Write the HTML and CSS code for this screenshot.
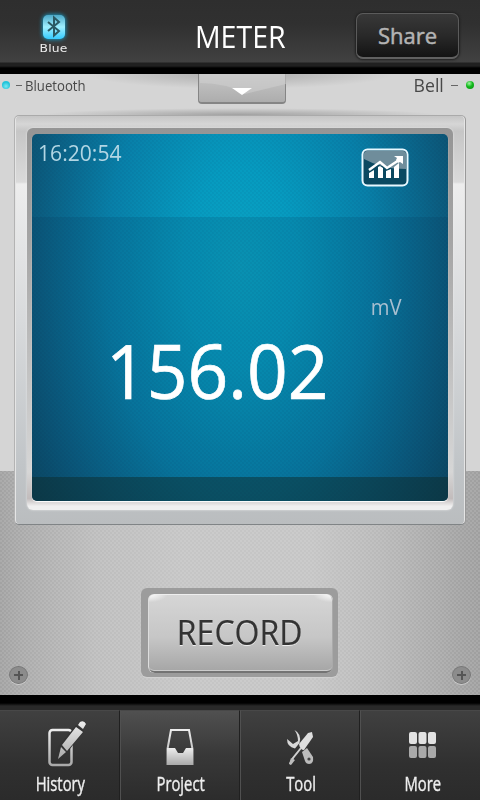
FILE: index.html
```
<!DOCTYPE html>
<html lang="en">
<head>
<meta charset="UTF-8">
<title>Meter</title>
<link rel="stylesheet" href="styles.css">
</head>
<body>
<header class="topbar">
  <div class="blue">
    <svg width="30" height="30" viewBox="0 0 30 30">
      <defs>
        <linearGradient id="glow" x2="0" y2="1"><stop offset="0" stop-color="#4da9c8"/><stop offset=".5" stop-color="#9eefff"/><stop offset="1" stop-color="#35cbff"/></linearGradient>
      </defs>
      <rect class="halo" x="3.500" y="2.500" width="23" height="25" rx="6"/>
      <rect x="4" y="3" width="22" height="24" rx="5" fill="url(#glow)"/>
      <path d="M9 10l11 9-5 4.500v-18l5 4.500-11 9" fill="none" stroke="#2b5963" stroke-width="2"/>
    </svg>
    <span>Blue</span>
  </div>
  <h1><span>METER</span></h1>
  <button class="share"><span>Share</span></button>
</header>

<main class="panel">
  <div class="status">
    <div class="bluetooth"><i class="dot cyan"></i><i class="dash"></i><span>Bluetooth</span></div>
    <div class="pulldown"><svg width="88" height="30" viewBox="0 0 88 30"><path d="M1 9Q28 9 46 20L87 10V0H1z" fill="#d0d0d0" opacity=".55"/><path d="M33 14h20l-10 7z" fill="#fff"/></svg></div>
    <div class="bell"><span>Bell</span><i class="dash"></i><i class="dot green"></i></div>
  </div>

  <section class="frame">
    <div class="bezel">
      <div class="display">
        <div class="display-top">
          <time>16:20:54</time>
          <svg class="chart" width="48" height="39" viewBox="0 0 48 39">
            <rect x="1.500" y="1.500" width="45" height="36" rx="5" fill="#0b4961"/>
            <path d="M3 11V6q0-3 3-3h36q3 0 3 3v15q-24 0-42-10z" fill="#6f8d9b"/>
            <rect x="1.500" y="1.500" width="45" height="36" rx="5" fill="none" stroke="#e8f8ff" stroke-width="2"/>
            <path d="M8 22l11-8 7 6 12-8" fill="none" stroke="#fff" stroke-width="2.500"/>
            <path d="M33 8h9v8l-3-2-2 1-2-3 1-2z" fill="#fff"/>
            <path d="M8 25l5-3v8H8zM17 19l2-1 3 2v10h-5zM25 23l5-2v9h-5zM33 19l5-4v15h-5z" fill="#fff"/>
          </svg>
        </div>
        <div class="reading">
          <div class="unit"><span>mV</span></div>
          <div class="value"><span>156.02</span></div>
        </div>
        <div class="display-foot"></div>
      </div>
    </div>
  </section>

  <div class="record-well"><button class="record"><span>RECORD</span></button></div>
  <div class="screws">
    <i class="screw"></i>
    <i class="screw"></i>
  </div>
</main>

<nav class="tabs">
  <svg width="0" height="0" class="defs"><defs><linearGradient id="metal" x2="0" y2="1"><stop offset="0" stop-color="#ededed"/><stop offset="1" stop-color="#a9a9a9"/></linearGradient></defs></svg>
  <a class="tab">
    <svg width="46" height="50" viewBox="0 0 46 50">
      <rect x="12.500" y="13" width="22" height="35" rx="3" fill="none" stroke="url(#metal)" stroke-width="2.500"/>
      <path d="M20 44l1-14 18-22 8 6-18 23z" fill="#333"/>
      <path d="M21 42l3-12 5 5zM25 28l14-18 7 5-16 19zM41 8l2-3q4-2 6 2l-3 5z" fill="url(#metal)"/>
    </svg>
    <span>History</span>
  </a>
  <a class="tab active">
    <svg width="46" height="50" viewBox="0 0 46 50">
      <path d="M10.500 32L14 13h18l3.500 19v15h-25z" fill="none" stroke="url(#metal)" stroke-width="2"/>
      <path d="M10 31h8l3 5h5l3-5h7v17H10z" fill="url(#metal)"/>
    </svg>
    <span>Project</span>
  </a>
  <a class="tab">
    <svg width="46" height="50" viewBox="0 0 46 50">
      <path d="M17.500 13Q25 17 22.500 26L18 31.500Q10 30 10 22l6 5 5-3q0-6-3.500-11z" fill="#d8d8d8"/>
      <path d="M25 35l5-4 6 9q1 7-4 7-3 0-4-3z" fill="#bcbcbc"/>
      <circle cx="32" cy="42" r="1.600" fill="#444"/>
      <path d="M22 27l9-11 4-1 1 5-9 13q-4 0-5-6z" fill="#dedede"/>
      <path d="M24 31l-8 10-3 6" fill="none" stroke="#d0d0d0" stroke-width="2"/>
      <path d="M12 47l2-6 4 2-4 5z" fill="#bcbcbc"/>
    </svg>
    <span>Tool</span>
  </a>
  <a class="tab">
    <svg width="46" height="50" viewBox="0 0 46 50">
      <g fill="#e2e2e2"><rect x="11" y="16" width="8" height="12" rx="2"/><rect x="20.500" y="16" width="8" height="12" rx="2"/><rect x="30" y="16" width="8" height="12" rx="2"/></g>
      <g fill="#a9a9a9"><rect x="11" y="30" width="8" height="12" rx="2"/><rect x="20.500" y="30" width="8" height="12" rx="2"/><rect x="30" y="30" width="8" height="12" rx="2"/></g>
    </svg>
    <span>More</span>
  </a>
</nav>
</body>
</html>
```
FILE: styles.css
```
* { box-sizing: border-box; }
body { margin: 0; width: 480px; height: 800px; overflow: hidden; background: #000; font-family: "Open Sans", "Noto Sans", sans-serif; display: flex; flex-direction: column; }
h1, button { margin: 0; padding: 0; border: 0; font: inherit; }
span, time { display: inline-block; white-space: nowrap; }

/* top bar */
.topbar { height: 74px; flex: none; display: grid; grid-template-columns: 108px 1fr 124px; background: linear-gradient(#2e2e2e, #303030 24px, #414141 62px, #202020 63px, #202020 66px, #000 68px); }
.blue { display: flex; flex-direction: column; align-items: center; padding-top: 12px; color: #eee; }
.blue svg { overflow: visible; }
.halo { fill: #16a4d0; filter: blur(2px); }
.blue span { font: 11px/13px "DejaVu Sans", sans-serif; letter-spacing: .2px; transform: scaleX(1.12); }
.topbar h1 { color: #fff; font-size: 31px; line-height: 42px; padding-top: 15px; text-align: center; font-weight: 400; padding-left: 16px; }
.topbar h1 span { transform: scaleX(.92); }
.share { width: 103px; height: 46px; margin: 13px 0 0; border: 1px solid #5b5b5b; border-bottom: 2px solid #606060; border-radius: 7px; background: linear-gradient(#383838, #292929 50%, #131313); box-shadow: 0 0 2px 1px #202020; color: #b4b4b4; font-size: 22px; font-weight: 500; line-height: 40px; padding-bottom: 2px; -webkit-text-stroke: .5px #b4b4b4; }

/* brushed metal body */
.panel { height: 621px; flex: none; background:
  linear-gradient(#d5d5d5, #d5d5d5) 0 0 / 100% 397px no-repeat,
  repeating-conic-gradient(rgba(255,255,255,.1) 0 25%, transparent 0 50%) 0 0 / 4px 4px,
  linear-gradient(90deg, #a2a2a2, #acacac 6%, #bdbdbd 20%, #c5c5c5 38%, #c5c5c5 65%, #b8b8b8 80%, #a3a3a3 96%, #9f9f9f); }
.status { height: 41px; display: flex; justify-content: space-between; color: #484848; background: radial-gradient(ellipse at 50% 0, #aaa 0, transparent 70%) 50% 0 / 310px 15px no-repeat, radial-gradient(ellipse at 50% 100%, #a0a0a0 0, transparent 70%) 50% 100% / 400px 7px no-repeat; }
.bluetooth, .bell { height: 22px; display: flex; align-items: center; }
.bluetooth { width: 198px; padding-left: 2px; font-size: 14px; }
.bluetooth span { transform: scaleX(.94); transform-origin: 0 50%; }
.bell { width: 194px; justify-content: flex-end; padding-right: 6px; font-size: 18px; }
.bell span { transform: scaleX(.98); transform-origin: 100% 50%; }
.dot { width: 8px; height: 8px; border-radius: 50%; }
.cyan { background: radial-gradient(circle at 50% 65%, #7ceaf4, #22c4da 60%); }
.green { background: radial-gradient(circle at 40% 30%, #a4f5a6, #13ba1c 45%, #078b10); }
.dash { width: 6px; height: 1px; background: #666; margin: 0 3px 0 6px; }
.bell .dash { width: 7px; margin: 0 8px 0 7px; }
.pulldown { width: 88px; height: 30px; border: 1px solid #858585; border-top: 0; border-bottom-width: 2px; border-radius: 0 0 4px 4px; background: linear-gradient(#c6c6c6, #adadad); }
.pulldown svg { display: block; }

/* screen */
.frame { width: 452px; height: 410px; margin: 0 14px; padding: 12px 12px 13px; border: 1px solid #999; border-color: #aaa #999 #808486 #b3b3b3; border-radius: 5px; background: linear-gradient(#c5c5c5, #d6d6d6 8px, #c6c6c6 15px, #dadada 66px, #ededed 68px, #d8dadc 50%, #c1c5c8 85%, #babdbf); box-shadow: inset 1px 0 #e5e5e5, inset -1px 0 #e5e5e5; }
.bezel { height: 382px; padding: 6px 5px 9px; border-radius: 6px; background: linear-gradient(#959595, #a5a5a5 30%, #c3c3c3 65%, #d6d6d6 90%, #c2bcbc 97%, #f0f0f0 99%); box-shadow: 0 0 2px #eee; }
.display { height: 367px; overflow: hidden; border-radius: 5px; display: flex; flex-direction: column; background:
  repeating-conic-gradient(rgba(0,20,50,.045) 0 25%, transparent 0 50%) 0 0 / 4px 4px,
  radial-gradient(ellipse 255px 440px at 50% 36%, #0aa3c3 0, #069bc0 22%, #0880a9 52%, #0b5f83 78%, #0c4660 100%); box-shadow: 0 1px 1px #fff; }
.display-top { height: 83px; flex: none; display: flex; justify-content: space-between; padding: 2px 39px 0 6px; }
.display time { color: #b2d6e4; font-size: 22px; line-height: 32px; transform: scaleX(.96); transform-origin: 0 0; }
.chart { margin-top: 12px; }
.reading { flex: 1; background: rgba(4,45,80,.15); }
.unit { text-align: right; padding: 73px 47px 0 0; color: #a8bfd0; font-size: 22px; line-height: 32px; }
.unit span { transform: scaleX(.92); transform-origin: 100% 0; }
.value { color: #fff; font-size: 75px; line-height: 100px; padding-left: 74px; margin-top: -2px; -webkit-text-stroke: .7px #fff; }
.value span { transform: scaleX(.95); transform-origin: 0 0; }
.display-foot { height: 24px; background: rgba(12,45,50,.58); }

/* record button */
.record-well { width: 197px; height: 89px; margin: 63px 0 0 141px; padding: 6px 5px 4px 7px; border-radius: 6px; background: #9c9c9c; box-shadow: 0 1px 1px #d2d2d2; }
.record { width: 185px; height: 79px; border-radius: 6px; background: radial-gradient(ellipse at 0 0, #fff, transparent 20px), radial-gradient(ellipse at 100% 0, #fff, transparent 20px), linear-gradient(#d6d6d6, #c6c6c6 55%, #a4a4a4); box-shadow: inset 0 1px #eee, inset 1px 0 #ddd, inset -1px 0 #aaa, inset 0 -2px #737373, inset 0 -3px #ccc; color: #333; font-size: 35px; line-height: 72px; padding-bottom: 3px; text-shadow: 0 1px #eee; display: block; -webkit-text-stroke: .2px #333; }
.record span { transform: scaleX(.915); margin-left: -2px; }
.screws { display: flex; justify-content: space-between; padding: 0 9px; margin-top: -11px; }
.screw { width: 19px; height: 18px; border-radius: 50%; border: 1px solid #777; box-shadow: 0 1px #ccc; background: linear-gradient(#555, #555) center / 9px 2px no-repeat, linear-gradient(#555, #555) center / 2px 9px no-repeat, #8c8c8c; }

/* bottom tabs */
.tabs { height: 105px; flex: none; padding-top: 15px; display: grid; grid-template-columns: repeat(4, 1fr); background: linear-gradient(#000 8px, #292929 11px); }
.defs { position: absolute; }
.tab { display: flex; flex-direction: column; align-items: center; padding-top: 6px; border-top: 1px solid #484848; border-left: 1px solid #505050; border-right: 1px solid #202020; background: linear-gradient(#404040, #303030 60%, #2b2b2b); color: #eee; font-size: 20px; line-height: 28px; }
.tab:first-of-type { border-left: 0; }
.tab:last-child { border-right: 0; }
.tab.active { background: linear-gradient(#505050, #383838 50%, #2c2c2c); }
.tab svg { flex: none; overflow: visible; margin-bottom: 3px; }
.tab span { transform: scaleX(.74); margin-left: 2px; -webkit-text-stroke: .4px #eee; }
.tab:last-child svg { margin-top: -1px; margin-bottom: 4px; }
.tab:last-child span { margin-left: 4px; }
```
